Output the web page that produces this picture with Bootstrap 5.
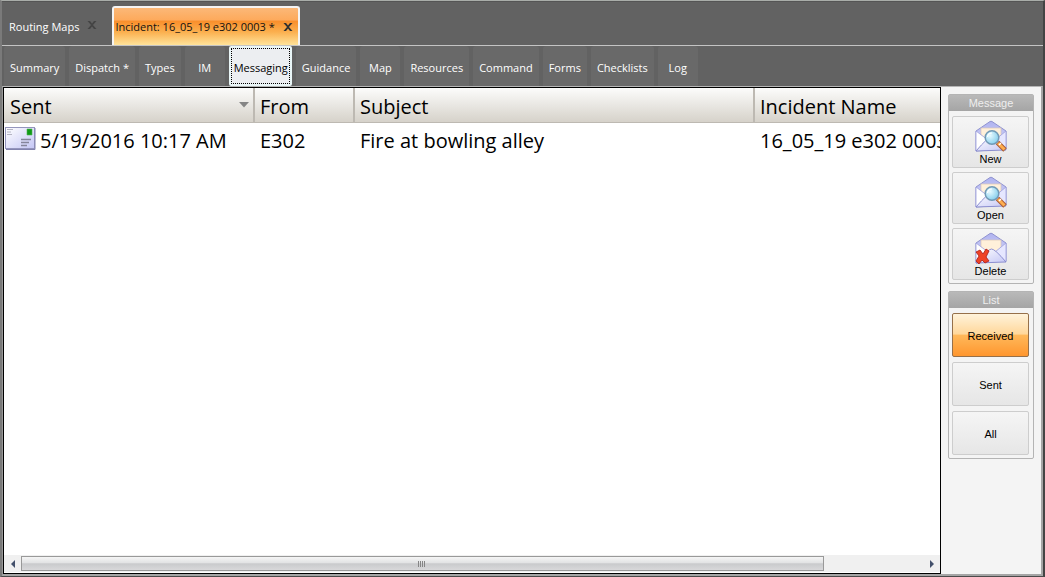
<!DOCTYPE html>
<html lang="en">
<head>
<meta charset="utf-8">
<meta name="viewport" content="width=device-width, initial-scale=1">
<title>Incident Messaging</title>
<link href="https://cdn.jsdelivr.net/npm/bootstrap@5.3.0/dist/css/bootstrap.min.css" rel="stylesheet">
<style>
  body { background: #626262; font-family: "Open Sans", "Noto Sans", sans-serif; font-size: 11px; line-height: 16px; color: #000; }
  button { color: inherit; font: inherit; }
  .app-window { border: 2px solid #7a7a7a; border-top-color: #a9ada9; border-right-color: #444; border-bottom-color: #4b4b4b; border-width: 1px 2px 1px 2px; }

  .doc-tabs { height: 45px; padding-top: 4px; border-bottom: 1px solid #c4c4c4; border-top: 1px solid #555; gap: 11px; }
  .doc-tab { color: #fff; padding: 2px 4px 0 7px; gap: 8px; }
  .doc-tab button { border: 0; padding: 0 0 4px; background: none; line-height: 0; color: #444; }
  .doc-tab.active { color: #111; padding: 0 5px 0 1px; gap: 8px; border: 2px solid #f4f4f4; border-bottom: 0; border-radius: 3px 3px 0 0; background: linear-gradient(#fbb878 0, #fdaa5c 32%, #f98f2c 36%, #fbb04f 65%, #ffe39a 100%); }
  .doc-tab.active button { padding: 0; color: #303030; }

  .page-tabs { height: 40px; gap: 4px; padding-left: 2px; }
  .page-tab { min-width: 40px; padding: 4px 6px 0; border: 0; background: #696969; color: #fff; border-radius: 3px 3px 0 0; white-space: nowrap; }
  .page-tab.active { color: #000; background: #e9f6f7; padding: 2px; border-radius: 2px; }
  .page-tab.active span { display: flex; height: 100%; align-items: center; padding: 3px 1px 0 2px; background: #eceef1; border: 1px dotted #000; }

  .workspace { background: #f4f4f4; border-top: 1px solid #b5b5b5; border-left: 1px solid #999; border-right: 2px solid #a5a5a5; border-bottom: 2px solid #a5a5a5; min-height: 0; }
  .messages { border: 1px solid #000; background: #fff; min-width: 0; }
  .grid-table { table-layout: fixed; width: 1050px; font-size: 20px; line-height: 28px; }
  .grid-table th { font-weight: 400; height: 34px; padding: 5px 5px 0; border-right: 2px solid #bdb9b2; border-bottom: 1px solid #bdb9b2; background: linear-gradient(#fcfcfb, #d6d2ca); }
  .grid-table th:first-child { padding-left: 6px; padding-right: 4px; }
  .grid-table td { padding: 4px 6px; white-space: nowrap; }
  .grid-table td:first-child { padding-left: 1px; }
  .col-sent { width: 250px; } .col-from { width: 100px; } .col-subject { width: 400px; }

  .scroll-row { height: 17px; margin-bottom: 1px; background: #f0f0f0; }
  .scroll-row button { width: 17px; border: 0; padding: 0; background: none; }
  .scroll-thumb { width: 89%; margin: 1px 0; border: 1px solid #999; background: linear-gradient(#f5f5f5, #e2e3e4 45%, #c9cacc 52%, #d8d8da); }

  .side-panel { width: 100px; padding: 7px 7px; gap: 7px; font-family: "Liberation Sans", Arial, sans-serif; }
  .tool-group { border: 1px solid #b4b4b4; border-radius: 2px; padding-bottom: 3px; }
  .tool-group h2 { margin: 0; height: 16px; font-size: 11px; line-height: 17px; text-align: center; color: #eee; background: linear-gradient(#b9b9b9, #a5a5a5); }
  .tool-list { padding: 5px 4px 0 3px; gap: 4px; }
  .tool-list.compact { gap: 5px; }
  .tool { height: 52px; padding: 2px 0 0; border: 1px solid #cdcdcd; border-radius: 2px; background: linear-gradient(#f5f5f5, #e6e6e6); font-size: 11px; line-height: 14px; }
  .compact .tool { height: 44px; padding: 1px 0 0; }
  .tool.active { border-color: #96704a; background: linear-gradient(#fff3db, #ffd79a 48%, #ffb95b 50%, #ff962e); }
</style>
</head>
<body>
<svg class="position-absolute" width="0" height="0" aria-hidden="true">
  <defs>
    <linearGradient id="paper" x1="0" y1="0" x2="1" y2="1"><stop offset="0" stop-color="#fff"/><stop offset="1" stop-color="#c4c6f5"/></linearGradient>
    <linearGradient id="flap" x1="0" y1="0" x2="0" y2="1"><stop offset="0" stop-color="#b0b3ef"/><stop offset="1" stop-color="#dcdefc"/></linearGradient>
    <radialGradient id="glass" cx=".35" cy=".35" r=".7"><stop offset="0" stop-color="#e9fbff"/><stop offset="1" stop-color="#83cdec"/></radialGradient>
    <symbol id="envelope" viewBox="0 0 32 32">
      <path d="M1 11 15 1.500Q16 1 17 1.500L31 11V29L1 31Z" fill="url(#flap)" stroke="#9093d0"/>
      <path d="M6 8H26V20L16 25 6 20Z" fill="#fff0da" stroke="#d9c6b8" stroke-width=".7"/>
      <path d="M1 11 13 20 1 31Z" fill="#fff" stroke="#9da0dc" stroke-width=".8"/>
      <path d="M31 11 20 20 31 30Z" fill="#e6e7ff" stroke="#9da0dc" stroke-width=".8"/>
      <path d="M1 31Q13 17 16.500 17T31 30Z" fill="url(#paper)" stroke="#8588cc" stroke-width=".9"/>
    </symbol>
    <symbol id="find-mail" viewBox="0 0 32 32">
      <use href="#envelope"/>
      <path d="m22.500 22.500 7.500 7.500" stroke="#a85b35" stroke-width="5"/>
      <path d="m23 23 6.500 6.500" stroke="#ffae4e" stroke-width="3"/>
      <path d="m24 25 2-2" stroke="#fff" stroke-width="1.500"/>
      <circle cx="17" cy="17.500" r="6.800" fill="url(#glass)" stroke="#7199b5" stroke-width="1.500"/>
      <path d="M12.500 17Q13 13 17 13" fill="none" stroke="#fff" stroke-width="1.200"/>
    </symbol>
    <symbol id="delete-mail" viewBox="0 0 32 32">
      <use href="#envelope"/>
      <path d="m1 20 4-2 3 4 3-5 3 2-3 6 3 4-4 2-3-3-3 4-3-3 3-5Z" fill="#ef4327" stroke="#a91b17" stroke-width=".8"/>
    </symbol>
    <symbol id="cross" viewBox="0 0 10 10"><path d="M.5 1h2.500l2 2.500L7 1h2.500L6 5l3.500 4H7L5 6.500 3 9H.5L4 5Z" fill="currentColor"/></symbol>
  </defs>
</svg>
<div class="app-window vh-100 d-flex flex-column overflow-hidden">
  <nav class="doc-tabs d-flex flex-shrink-0" aria-label="Open documents">
    <div class="doc-tab d-flex align-items-center"><span>Routing Maps</span><button type="button" aria-label="Close Routing Maps"><svg width="10" height="10"><use href="#cross"/></svg></button></div>
    <div class="doc-tab active d-flex align-items-center"><span>Incident: 16_05_19 e302 0003 *</span><button type="button" aria-label="Close incident"><svg width="10" height="10"><use href="#cross"/></svg></button></div>
  </nav>
  <nav class="page-tabs d-flex flex-shrink-0" aria-label="Incident pages">
    <button type="button" class="page-tab">Summary</button>
    <button type="button" class="page-tab">Dispatch *</button>
    <button type="button" class="page-tab">Types</button>
    <button type="button" class="page-tab">IM</button>
    <button type="button" class="page-tab active"><span>Messaging</span></button>
    <button type="button" class="page-tab">Guidance</button>
    <button type="button" class="page-tab">Map</button>
    <button type="button" class="page-tab">Resources</button>
    <button type="button" class="page-tab">Command</button>
    <button type="button" class="page-tab">Forms</button>
    <button type="button" class="page-tab">Checklists</button>
    <button type="button" class="page-tab">Log</button>
  </nav>
  <main class="workspace d-flex flex-grow-1">
    <section class="messages d-flex flex-column flex-grow-1">
      <div class="flex-grow-1 overflow-hidden">
        <table class="grid-table">
          <thead>
            <tr>
              <th class="col-sent"><div class="d-flex justify-content-between align-items-center">Sent<svg class="mb-1" width="10" height="6"><path d="M0 0h10L5 5.500Z" fill="#858585"/></svg></div></th>
              <th class="col-from">From</th>
              <th class="col-subject">Subject</th>
              <th>Incident Name</th>
            </tr>
          </thead>
          <tbody>
            <tr>
              <td><div class="d-flex align-items-center"><svg class="flex-shrink-0 me-1 mb-1" width="31" height="23" viewBox="0 0 31 23"><rect x=".5" y=".5" width="29" height="21" fill="url(#paper)" stroke="#9495bd"/><path d="M30 1v21.500H1" fill="none" stroke="#8283ae"/><path d="M2 2.500h6M2 5h4M2 7.500h5" stroke="#b4b4c4"/><path d="M22 2h5v6h-5z" fill="#119b16" stroke="#54b654" stroke-width=".6"/><path d="M16 12.500h10M16 15.500h8M16 18.500h6" stroke="#85859b" stroke-width="1.500"/></svg><span>5/19/2016 10:17 AM</span></div></td>
              <td>E302</td>
              <td>Fire at bowling alley</td>
              <td>16_05_19 e302 0003</td>
            </tr>
          </tbody>
        </table>
      </div>
      <div class="scroll-row d-flex flex-shrink-0">
        <button type="button" aria-label="Scroll left"><svg class="d-block mx-auto" width="4" height="8"><path d="M4 0v8L0 4Z" fill="#43506b"/></svg></button>
        <div class="flex-grow-1 d-flex"><div class="scroll-thumb d-flex align-items-center justify-content-center"><svg width="8" height="6"><path d="M.5 0v6m2-6v6m2-6v6m2-6v6" stroke="#858585"/></svg></div></div>
        <button type="button" aria-label="Scroll right"><svg class="d-block mx-auto" width="4" height="8"><path d="M0 0v8l4-4Z" fill="#43506b"/></svg></button>
      </div>
    </section>
    <aside class="side-panel d-flex flex-column flex-shrink-0">
      <section class="tool-group">
        <h2>Message</h2>
        <div class="tool-list d-flex flex-column">
          <button type="button" class="tool"><svg class="d-block mx-auto" width="32" height="32"><use href="#find-mail"/></svg>New</button>
          <button type="button" class="tool"><svg class="d-block mx-auto" width="32" height="32"><use href="#find-mail"/></svg>Open</button>
          <button type="button" class="tool"><svg class="d-block mx-auto" width="32" height="32"><use href="#delete-mail"/></svg>Delete</button>
        </div>
      </section>
      <section class="tool-group">
        <h2>List</h2>
        <div class="tool-list compact d-flex flex-column">
          <button type="button" class="tool active">Received</button>
          <button type="button" class="tool">Sent</button>
          <button type="button" class="tool">All</button>
        </div>
      </section>
    </aside>
  </main>
</div>
<script src="https://cdn.jsdelivr.net/npm/bootstrap@5.3.0/dist/js/bootstrap.bundle.min.js"></script>
</body>
</html>
